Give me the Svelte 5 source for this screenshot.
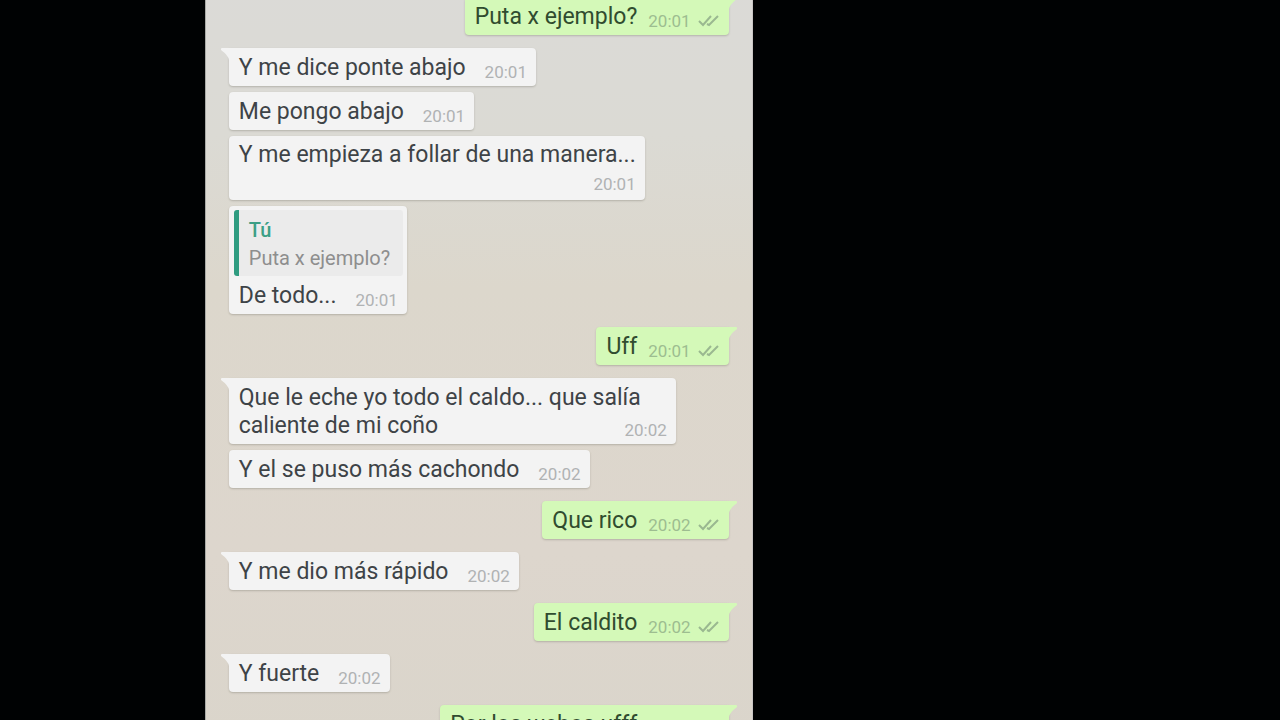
<script>
    const messages = [
        { text: 'Puta x ejemplo?', time: '20:01', sent: true, first: true },
        { text: 'Y me dice ponte abajo', time: '20:01', first: true },
        { text: 'Me pongo abajo', time: '20:01' },
        { text: 'Y me empieza a follar de una manera...', time: '20:01', stacked: true },
        { text: 'De todo...', time: '20:01', quote: { author: 'Tú', text: 'Puta x ejemplo?' } },
        { text: 'Uff', time: '20:01', sent: true, first: true },
        { text: 'Que le eche yo todo el caldo... que salía caliente de mi coño', time: '20:02', first: true },
        { text: 'Y el se puso más cachondo', time: '20:02' },
        { text: 'Que rico', time: '20:02', sent: true, first: true },
        { text: 'Y me dio más rápido', time: '20:02', first: true },
        { text: 'El caldito', time: '20:02', sent: true, first: true },
        { text: 'Y fuerte', time: '20:02', first: true },
        { text: 'Por los webos ufff', time: '20:02', sent: true, first: true }
    ];
</script>

<main>
    <section class="chat">
        {#each messages as m}
            <article class="bubble" class:sent={m.sent} class:first={m.first} class:stacked={m.stacked}>
                {#if m.first}
                    <svg class="tail" viewBox="0 0 10 12" aria-hidden="true">
                        <path d="M1 0H10V12H8Q7 7 0 2Q-.3 0 1 0Z" />
                    </svg>
                {/if}
                {#if m.quote}
                    <blockquote>
                        <strong>{m.quote.author}</strong>
                        <p>{m.quote.text}</p>
                    </blockquote>
                {/if}
                <div class="body">
                    <span class="text">{m.text}</span>
                    <span class="meta">
                        <time>{m.time}</time>
                        {#if m.sent}
                            <svg class="ticks" viewBox="0 0 22 14" role="img" aria-label="Entregado">
                                <path d="M1 7L5 11L13 2M9 10L11 11L20 2" />
                            </svg>
                        {/if}
                    </span>
                </div>
            </article>
        {/each}
    </section>
</main>

<style>
    :global(body) {
        margin: 0;
        background: #000203;
    }

    main {
        height: 100vh;
        overflow: hidden;
        font-family: Roboto, "Liberation Sans", sans-serif;
    }

    .chat {
        display: flex;
        flex-direction: column;
        align-items: flex-start;
        box-sizing: border-box;
        width: 42.8%;
        min-height: 100%;
        margin-left: 16%;
        margin-top: -16px;
        padding: 0 23px;
        border-left: 1px solid #a9aaa6;
        border-right: 1px solid #c9c5c4;
        background: linear-gradient(180deg, #dbdad7 0%, #dbdad4 20%, #dcd7cc 40%, #ddd6cd 75%, #dad5cb 100%);
    }

    .bubble {
        position: relative;
        flex: none;
        box-sizing: border-box;
        max-width: 447px;
        margin-top: 6px;
        border-radius: 4px;
        background: #f3f3f3;
        box-shadow: 0 1px 2px rgba(90, 85, 75, 0.3);
        color: #3e4347;
    }

    .bubble.first {
        margin-top: 13px;
        border-top-left-radius: 0;
    }

    .bubble.sent {
        align-self: flex-end;
        border-top-left-radius: 4px;
        border-top-right-radius: 0;
        background: #d4f9b8;
        color: #304c2f;
    }

    .tail {
        position: absolute;
        top: 0;
        left: -8px;
        width: 10px;
        height: 12px;
        fill: #f3f3f3;
    }

    .sent .tail {
        left: auto;
        right: -8px;
        fill: #d4f9b8;
        transform: scaleX(-1);
    }

    .body {
        display: flow-root;
        padding: 6px 9px 4px 10px;
    }

    .text {
        font-size: 23px;
        line-height: 28px;
    }

    .meta {
        float: right;
        display: flex;
        align-items: center;
        gap: 7px;
        height: 20px;
        margin: 8px 0 0 19px;
        color: #b0b2b3;
        font-size: 17px;
        line-height: 20px;
    }

    .sent .meta {
        margin-left: 11px;
        color: #9dbd90;
    }

    .ticks {
        width: 22px;
        height: 14px;
        fill: none;
        stroke: #9ab890;
        stroke-width: 2;
    }

    .stacked .body {
        display: flex;
        flex-direction: column;
        padding-top: 5px;
        padding-bottom: 6px;
    }

    .stacked .meta {
        align-self: flex-end;
        margin-top: 5px;
    }

    blockquote {
        margin: 4px 4px 0 5px;
        padding: 6px 12px 4px 10px;
        border-left: 5px solid #2f9c80;
        border-radius: 3px;
        background: #ebebeb;
        color: #8e8e8e;
        font-size: 20px;
        line-height: 28px;
    }

    blockquote strong {
        display: block;
        color: #3c9f86;
        font-weight: 500;
    }

    blockquote p {
        margin: 0;
    }
</style>
